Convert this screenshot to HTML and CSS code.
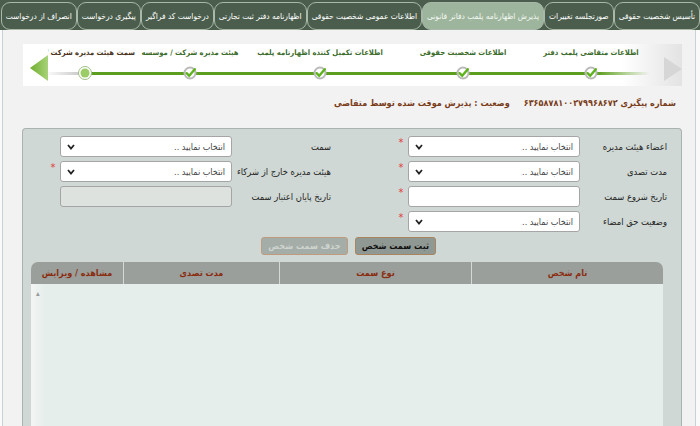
FILE: index.html
```html
<!DOCTYPE html>
<html lang="fa" dir="rtl">

<head>
    <meta charset="UTF-8">
    <meta name="viewport" content="width=device-width, initial-scale=1.0">
    <title>پذیرش اظهارنامه پلمب دفاتر قانونی</title>
    <link rel="stylesheet" href="styles.css">
</head>

<body>

    <nav class="tabs">
        <a class="tab">تأسیس شخصیت حقوقی</a>
        <a class="tab">صورتجلسه تغییرات</a>
        <a class="tab active">پذیرش اظهارنامه پلمب دفاتر قانونی</a>
        <a class="tab">اطلاعات عمومی شخصیت حقوقی</a>
        <a class="tab">اظهارنامه دفتر ثبت تجارتی</a>
        <a class="tab">درخواست کد فراگیر</a>
        <a class="tab">پیگیری درخواست</a>
        <a class="tab">انصراف از درخواست</a>
    </nav>

    <main class="page">

        <!-- مراحل ثبت -->
        <div class="wizard">
            <span class="wizard-next">
                <svg width="18" height="24" viewBox="0 0 18 24"><polygon points="0,0 18,12 0,24" fill="#d6d6d6" /></svg>
            </span>
            <ol class="steps">
                <li class="step step-first">
                    <span class="step-title">اطلاعات متقاضی پلمب دفتر</span>
                    <span class="step-track"><svg class="dot" width="16" height="16" viewBox="0 0 16 16"><circle cx="8" cy="8" r="5.5" fill="#fff" stroke="#b9b9b9" stroke-width="2" /><path d="M4.6 8.2 L7.2 10.8 L12.8 4.2" fill="none" stroke="#5db31c" stroke-width="2.4" stroke-linecap="round" /></svg></span>
                </li>
                <li class="step">
                    <span class="step-title">اطلاعات شخصیت حقوقی</span>
                    <span class="step-track"><svg class="dot" width="16" height="16" viewBox="0 0 16 16"><circle cx="8" cy="8" r="5.5" fill="#fff" stroke="#b9b9b9" stroke-width="2" /><path d="M4.6 8.2 L7.2 10.8 L12.8 4.2" fill="none" stroke="#5db31c" stroke-width="2.4" stroke-linecap="round" /></svg></span>
                </li>
                <li class="step">
                    <span class="step-title">اطلاعات تکمیل کننده اظهارنامه پلمب</span>
                    <span class="step-track"><svg class="dot" width="16" height="16" viewBox="0 0 16 16"><circle cx="8" cy="8" r="5.5" fill="#fff" stroke="#b9b9b9" stroke-width="2" /><path d="M4.6 8.2 L7.2 10.8 L12.8 4.2" fill="none" stroke="#5db31c" stroke-width="2.4" stroke-linecap="round" /></svg></span>
                </li>
                <li class="step">
                    <span class="step-title">هیئت مدیره شرکت / موسسه</span>
                    <span class="step-track"><svg class="dot" width="16" height="16" viewBox="0 0 16 16"><circle cx="8" cy="8" r="5.5" fill="#fff" stroke="#b9b9b9" stroke-width="2" /><path d="M4.6 8.2 L7.2 10.8 L12.8 4.2" fill="none" stroke="#5db31c" stroke-width="2.4" stroke-linecap="round" /></svg></span>
                </li>
                <li class="step step-current">
                    <span class="step-title">سمت هیئت مدیره شرکت / موسسه</span>
                    <span class="step-track"><svg class="dot" width="16" height="16" viewBox="0 0 16 16"><circle cx="8" cy="8" r="6.5" fill="#fff" stroke="#9fbf86" stroke-width="1" /><circle cx="8" cy="8" r="4.5" fill="#9ccc65" /></svg></span>
                </li>
            </ol>
            <span class="wizard-prev">
                <svg width="18" height="26" viewBox="0 0 18 26">
                    <defs>
                        <linearGradient id="prevFill" x1="0" y1="0" x2="1" y2="0">
                            <stop offset="0" stop-color="#6fae2e" />
                            <stop offset="1" stop-color="#a9d37a" />
                        </linearGradient>
                    </defs>
                    <polygon points="18,0 18,26 0,13" fill="url(#prevFill)" />
                </svg>
            </span>
        </div>

        <p class="track-info">
            <span>شماره پیگیری ۶۳۶۵۸۷۸۱۰۰۲۷۹۹۶۸۶۷۲</span>
            <span>وضعیت : پذیرش موقت شده توسط متقاضی</span>
        </p>

        <section class="panel">
            <div class="form-grid">
                <label class="lbl">اعضاء هیئت مدیره</label>
                <div class="field"><span>انتخاب نمایید ..</span><svg width="8" height="6" viewBox="0 0 8 6"><path d="M1 1 L4 4.5 L7 1" fill="none" stroke="#222" stroke-width="1.8" /></svg></div>
                <span class="req">*</span>
                <span></span>
                <label class="lbl">سمت</label>
                <div class="field"><span>انتخاب نمایید ..</span><svg width="8" height="6" viewBox="0 0 8 6"><path d="M1 1 L4 4.5 L7 1" fill="none" stroke="#222" stroke-width="1.8" /></svg></div>
                <span></span>

                <label class="lbl">مدت تصدی</label>
                <div class="field"><span>انتخاب نمایید ..</span><svg width="8" height="6" viewBox="0 0 8 6"><path d="M1 1 L4 4.5 L7 1" fill="none" stroke="#222" stroke-width="1.8" /></svg></div>
                <span class="req">*</span>
                <span></span>
                <label class="lbl">هیئت مدیره خارج از شرکاء</label>
                <div class="field"><span>انتخاب نمایید ..</span><svg width="8" height="6" viewBox="0 0 8 6"><path d="M1 1 L4 4.5 L7 1" fill="none" stroke="#222" stroke-width="1.8" /></svg></div>
                <span class="req">*</span>

                <label class="lbl">تاریخ شروع سمت</label>
                <div class="field"></div>
                <span class="req">*</span>
                <span></span>
                <label class="lbl">تاریخ پایان اعتبار سمت</label>
                <div class="field disabled"></div>
                <span></span>

                <label class="lbl">وضعیت حق امضاء</label>
                <div class="field"><span>انتخاب نمایید ..</span><svg width="8" height="6" viewBox="0 0 8 6"><path d="M1 1 L4 4.5 L7 1" fill="none" stroke="#222" stroke-width="1.8" /></svg></div>
                <span class="req">*</span>
            </div>

            <div class="actions">
                <button class="btn">ثبت سمت شخص</button>
                <button class="btn" disabled>حذف سمت شخص</button>
            </div>

            <table class="grid">
                <thead>
                    <tr>
                        <th class="col-name">نام شخص</th>
                        <th class="col-type">نوع سمت</th>
                        <th class="col-term">مدت تصدی</th>
                        <th class="col-edit">مشاهده / ویرایش</th>
                    </tr>
                </thead>
                <tbody>
                    <tr>
                        <td colspan="4"><span class="scroll-up">▴</span></td>
                    </tr>
                </tbody>
            </table>
        </section>

    </main>

</body>

</html>
```

FILE: styles.css
```css
* {
    box-sizing: border-box;
}

body {
    margin: 0;
    background: #fafafa;
    direction: rtl;
    font-family: "DejaVu Sans Condensed", "DejaVu Sans", sans-serif;
    font-size: 10px;
    color: #333;
}

/* نوار زبانه ها */
.tabs {
    display: flex;
    height: 30px;
    padding: 2px 0 0 7px;
    background: #4b5e4d;
    overflow: hidden;
}

.tab {
    flex: none;
    height: 28px;
    line-height: 26px;
    padding: 0 4px;
    border: 1px solid #a9b8a8;
    border-radius: 9px;
    color: #fff;
    font-size: 8.3px;
    white-space: nowrap;
}

.tab.active {
    background: #9db59c;
    color: #f4f8f2;
}

.page {
    min-height: 396px;
    margin: 0 4px 0 2px;
    padding: 14px 13px 0 19px;
    border-left: 1px solid #c7d2d6;
    border-right: 1px solid #c7d2d6;
    background: #f2f2f2;
}

/* مراحل */
.wizard {
    position: relative;
    display: flex;
    height: 42px;
    margin-left: 1px;
    padding-left: 8px;
    background: linear-gradient(to left, #e3e3e3 0, #fff 60px);
    overflow: hidden;
}

.wizard-next {
    flex: none;
    width: 27px;
    padding: 13px 0 0 5px;
}

.wizard-prev {
    position: absolute;
    top: 0;
    bottom: 0;
    left: 0;
    width: 25px;
    padding: 11px 0 0 5px;
    background: #fff;
}

.steps {
    display: grid;
    grid-template-columns: 128px 128px 158px 102px 108px;
    margin: 0;
    padding: 0;
    list-style: none;
}

.step {
    display: flex;
    flex-direction: column;
    align-items: center;
    padding-top: 2px;
}

.step-title {
    height: 14px;
    line-height: 14px;
    color: #3c6c2b;
    font-weight: bold;
    font-size: 7.6px;
    white-space: nowrap;
}

.step-track {
    display: flex;
    justify-content: center;
    width: 100%;
    height: 16px;
    margin-top: 5px;
    background: linear-gradient(#5c9e1d, #5c9e1d) center / 100% 3px no-repeat;
}

.step-first .step-track {
    background: linear-gradient(to right, #5c9e1d 55%, rgba(92, 158, 29, 0) 96%) center / 100% 3px no-repeat;
}

/* عنوان مرحله جاری از سمت راست شروع و زیر فلش بریده می شود */
.step-current .step-title {
    align-self: flex-start;
    margin-right: 4px;
    color: #4b3420;
}

.step-current .step-track {
    background: linear-gradient(to right, rgba(205, 205, 205, 0) 12%, #cfcfcf 42%, #cfcfcf 50%, #5c9e1d 50%) center / 100% 3px no-repeat;
}

.track-info {
    display: flex;
    gap: 14px;
    margin: 10px 0 18px;
    padding-right: 6px;
    line-height: 14px;
    color: #7a3d1b;
    font-weight: bold;
    font-size: 9px;
}

/* فرم */
.panel {
    min-height: 300px;
    padding-top: 7px;
    border: 1px solid #aab3af;
    border-bottom: 0;
    border-radius: 4px 4px 0 0;
    background: #cfd8d4;
}

.form-grid {
    display: grid;
    grid-template-columns: 87px 172px 14px 63px 99px 172px 14px;
    grid-auto-rows: 21px;
    row-gap: 4px;
    margin-right: 14px;
}

.lbl {
    align-self: center;
    color: #222;
    font-size: 9.3px;
    white-space: nowrap;
}

.field {
    display: flex;
    align-items: center;
    justify-content: space-between;
    padding: 0 6px;
    border: 1px solid #a5a5a5;
    border-radius: 3px;
    background: #fff;
    color: #444;
    font-size: 9px;
}

.field.disabled {
    background: #dde2df;
}

.req {
    padding-top: 1px;
    color: #e0393b;
    font-size: 11px;
    line-height: 11px;
    text-align: center;
}

.actions {
    display: flex;
    gap: 7px;
    margin: 5px 245px 0 0;
}

.btn {
    height: 18px;
    padding: 0 6px;
    border: 1px solid #a9845f;
    border-radius: 3px;
    background: #8f9892;
    color: #111;
    font-family: inherit;
    font-weight: bold;
    font-size: 9px;
}

.btn:disabled {
    border-color: #c09c7c;
    background: #a4ada7;
    color: #cfd4d0;
}

/* جدول سمت ها */
.grid {
    width: 632px;
    margin: 7px 18px 0 8px;
    border-spacing: 0;
}

.grid th {
    height: 22px;
    padding: 0;
    border-left: 1px solid #d4d9d6;
    background: #9a9f9b;
    color: #8a2c10;
    font-size: 9px;
    font-weight: bold;
}

.grid th:first-child {
    border-radius: 0 7px 0 0;
}

.grid th:last-child {
    border-left: 0;
    border-radius: 7px 0 0 0;
}

.col-name,
.col-type {
    width: 192px;
}

.col-term {
    width: 156px;
}

.grid td {
    height: 150px;
    padding: 3px 5px;
    vertical-align: top;
    text-align: left;
    background: linear-gradient(to right, #f3f5f4 0, #e5eeeb 14px);
}

.scroll-up {
    color: #9a9a9a;
    font-size: 8px;
}
```
